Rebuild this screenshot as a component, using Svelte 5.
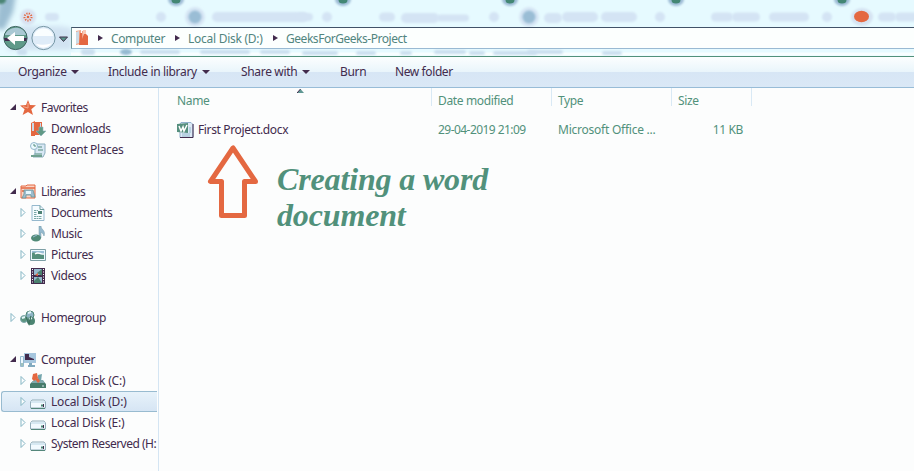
<script>
  const groups = [
    { name: 'Favorites', icon: 'star', open: true, tight: true, items: [
      { name: 'Downloads', icon: 'download' }, { name: 'Recent Places', icon: 'recent' } ] },
    { name: 'Libraries', icon: 'library', open: true, tight: true, items: [
      { name: 'Documents', icon: 'document', more: true }, { name: 'Music', icon: 'music', more: true },
      { name: 'Pictures', icon: 'picture', more: true }, { name: 'Videos', icon: 'video', more: true } ] },
    { name: 'Homegroup', icon: 'homegroup', open: false, items: [] },
    { name: 'Computer', icon: 'computer', open: true, items: [
      { name: 'Local Disk (C:)', icon: 'system', more: true, wide: true }, { name: 'Local Disk (D:)', icon: 'disk', more: true, selected: true, wide: true },
      { name: 'Local Disk (E:)', icon: 'disk', more: true, wide: true }, { name: 'System Reserved (H:', icon: 'disk', more: true, tight: true } ] }
  ];
  const smudges = [
    [52, 17, 7, 4], [161, 17, 5, 5], [260, 17, 48, 5], [305, 17, 8, 4], [327, 17, 5, 5], [387, 17, 8, 4.5], [420, 18, 19, 5],
    [453, 18, 16, 3.5], [494, 17, 5, 5], [553, 18, 9, 5], [580, 17, 18, 5], [619, 17, 18, 5], [660, 17, 5, 5],
    [722, 17, 11, 4.5], [746, 17, 14, 4.5], [789, 17, 20, 4.5], [827, 17, 5, 5], [887, 17, 9, 4.5], [907, 17, 12, 4.5]
  ];
  const lower = [[22, 52, 5, 3], [88, 52, 7, 3], [160, 52, 20, 2], [225, 52, 25, 2], [275, 52, 15, 2], [320, 53, 18, 2], [366, 53, 10, 2], [406, 53, 6, 2], [450, 52, 16, 2], [477, 53, 8, 2], [515, 53, 22, 2], [545, 52, 18, 2], [612, 53, 10, 2]];
  const spots = [176, 343, 510, 676, 842];
</script>

{#snippet arrow(open)}
  {#if open}
    <svg class="arrow" viewBox="0 0 7 9"><path d="M6 1v6H0z" fill="#422b4d" /></svg>
  {:else}
    <svg class="arrow" viewBox="0 0 7 9"><path d="M1 .5v8L5 4.5z" fill="#fcfeff" stroke="#84b5c3" /></svg>
  {/if}
{/snippet}

{#snippet glyph(kind)}
  <svg class="icon" viewBox="0 0 16 16">
    {#if kind === 'star'}
      <path d="M8 0l2 5 6 .3-4.7 4L13 15l-5-3-5.4 3 2-5.7L0 5.5 6 5z" fill="#e46841" /><path d="M8 3v5L3 6.6" fill="none" stroke="#f5aa8e" />
    {:else if kind === 'download'}
      <path d="M1 2l4-2v15H1zM5 1h7v13H5z" fill="#e46841" /><path d="M2 2h2v8H2zM10 2h1v5h-1z" fill="#c9dae9" /><path d="M9 6h4v4h3l-5 5-5-5h3z" fill="#609985" stroke="#8fb5bd" stroke-width=".6" />
    {:else if kind === 'recent'}
      <path d="M5 2h10v9l-2 4H3l2-4z" fill="#d8e8f5" stroke="#8baebe" /><circle cx="4" cy="4" r="3.5" fill="#edfaff" stroke="#94b8cc" /><path d="M4 2v2h2M8 5h4M8 8h5M5 12h7" fill="none" stroke="#528c7a" /><path d="M1 13h11v2H1z" fill="#70a190" />
    {:else if kind === 'library'}
      <path d="M1 2h5l1-1h8v13H1z" fill="#fbd5c6" stroke="#e46841" /><path d="M1 4h14M2 7h3" stroke="#e46841" stroke-width="1.4" /><path d="M4 6h9l2 7h-4v-2H6v3H2l2-4z" fill="#9dbdcf" stroke="#628f91" stroke-width=".7" /><path d="M6 7h5v3H6z" fill="#e5f7fd" />
    {:else if kind === 'document'}
      <path d="M2 .5h8l4 4v11H2z" fill="#f6fcff" stroke="#96b9ce" /><path d="M10 .5v4h4" fill="none" stroke="#6b9c9b" /><path d="M4 5.5h4m-4 2h3m-3 2h3m-3 2h8m-8 2h8" fill="none" stroke="#6b9c9b" stroke-width=".9" stroke-dasharray="2 .5" /><path d="M8 6h4v3H8z" fill="#4d8174" />
    {:else if kind === 'music'}
      <path d="M9 0h2c0 4 5 4 3 10-1-3-2-3-3-4v6H9z" fill="#94b9ce" stroke="#7198a6" stroke-width=".5" /><ellipse cx="6" cy="12" rx="5" ry="3.5" fill="#508a76" /><path d="M3 11l4-2" stroke="#94b9ce" />
    {:else if kind === 'picture'}
      <path d="M.5 2.5h15v11H.5z" fill="#edf9ff" stroke="#7c9fa5" /><path d="M2 4h12v8H2z" fill="#9bbfd6" /><path d="M2 6c5-2 7 3 12 1v5H2z" fill="#548f7c" /><path d="M5 7c4-3 5 1 9 0" fill="none" stroke="#fff" stroke-width="1.4" />
    {:else if kind === 'video'}
      <path d="M1 0h14v16H1z" fill="#422b4d" /><path d="M4 1h8v6H4zM4 9h8v6H4z" fill="#94b9ce" /><path d="M12 1L7 5l5 3zM4 13l4-4 4 6H4z" fill="#4b816f" /><path d="M2.5 1v15M13.5 1v15" stroke="#fff" stroke-width="1" stroke-dasharray="1 1.5" /><path d="M4 8h8" stroke="#422b4d" /><path d="M5 7l3-2v3z" fill="#e46841" />
    {:else if kind === 'homegroup'}
      <circle cx="10" cy="5" r="4" fill="#8eb4c5" stroke="#4d8672" /><circle cx="4" cy="9" r="3.5" fill="#5b947f" stroke="#7da8ad" /><circle cx="11" cy="11" r="4" fill="#4c8572" /><path d="M8 3l3-1M2 8l3-1M9 9l3-1" stroke="#e4f6fa" stroke-width="2" /><path d="M6 7l3 7 2-8" fill="none" stroke="#3e725f" stroke-width="1.3" />
    {:else if kind === 'computer'}
      <path d="M4 1h12v10H4z" fill="#a6c6de" /><path d="M5 2h4v3l5 2v1H5z" fill="#422b4d" /><path d="M9 11h3v2h3v2H8v-2h1z" fill="#81aabf" /><path d="M.5 4.5h3v10h-3z" fill="#edf8ff" stroke="#94b9ce" /><path d="M2 11v3" stroke="#528b78" />
    {:else if kind === 'system'}
      <path d="M3 8h10l3 3v4H0v-4z" fill="#477c6b" /><path d="M1 10l3-3h9l2 3z" fill="#81a9ad" /><path d="M3 1l4-1 1 5-4 3-2-2z" fill="#e46841" /><path d="M8 2l4-1-1 7H8z" fill="#74a6ad" /><path d="M5 6l3-1 2 3-2 2z" fill="#e46841" /><path d="M12 13h2" stroke="#d5e6ec" />
    {:else}
      <path d="M2 6h12l1.5 2v6H.5V8z" fill="#f2faff" stroke="#94aeba" /><path d="M1 8h14" stroke="#d6e8f2" stroke-width="2" /><path d="M1 14.5h14" stroke="#54877b" /><path d="M11 10.5h3v2h-3z" fill="#4c8873" /><path d="M13.5 10v3" stroke="#422b4d" />
    {/if}
  </svg>
{/snippet}

<div class="window">
  <header>
    <svg class="glass" viewBox="0 0 914 56">
      <defs>
        <filter id="soft" x="-50%" width="200%" y="-50%" height="200%"><feGaussianBlur stdDeviation="1.3" /></filter>
        <filter id="wide" x="-50%" width="200%" y="-50%" height="200%"><feGaussianBlur stdDeviation="2.5" /></filter>
      </defs>
      <path d="M0-5h16L13 12 4 30-5 28z" fill="#9bbdd2" filter="url(#wide)" />
      <ellipse cx="1" cy="0" rx="5" ry="4" fill="#4b8574" filter="url(#soft)" />
      <path d="M20 26h40l12 2v22H6z" fill="#d1e3f2" filter="url(#wide)" />
      {#each smudges as [x, y, rx, ry]}<rect x={x - rx} y={y - ry} width={rx * 2} height={ry * 2} rx={ry} fill="#d4e4f4" filter="url(#soft)" />{/each}
      <path d="M71 54h843" stroke="#f8feff" stroke-width="3" />
      {#each lower as [x, y, rx, ry]}<rect x={x - rx} y={y - ry} width={rx * 2} height={ry * 2} rx={ry} fill="#cbdfef" filter="url(#soft)" />{/each}
      <ellipse cx="126" cy="52" rx="6" ry="3" fill="#94b9d1" filter="url(#soft)" />
      {#each spots as x}
        <ellipse cx={x} cy="-1" rx="8" ry="7" fill="#9dbbd5" filter="url(#soft)" />
        <ellipse cx={x} cy="0" rx="4.5" ry="3.5" fill="#438774" />
      {/each}
      {#each [195, 529] as x}
        <circle cx={x} cy="17" r="10" fill="#d6e5f4" filter="url(#soft)" /><circle cx={x} cy="17" r="6.5" fill="#9abdd5" filter="url(#soft)" />
      {/each}
      <circle cx="28" cy="17" r="8" fill="#d8e2f1" filter="url(#soft)" />
      <circle cx="28" cy="17" r="3.5" fill="none" stroke="#e46841" stroke-width="2" stroke-dasharray="1.2 1.2" /><circle cx="28" cy="17" r="1.3" fill="#e46841" />
      <ellipse cx="862" cy="17" rx="11" ry="9" fill="#d5e3f2" filter="url(#soft)" /><ellipse cx="861.5" cy="16.5" rx="7.5" ry="5.7" fill="#e46841" />
    </svg>
    <div class="nav">
      <svg class="buttons" viewBox="0 0 71 30">
        <circle cx="15.5" cy="14" r="11.6" fill="#5f9a89" stroke="#3d6460" />
        <path d="M5 11c2-8 18-11 21 0" fill="#a9c8d3" />
        <path d="M4 14h23l-1 3H5z" fill="#422b4d" />
        <path d="M7 14l8-6v4h9v5h-9v4z" fill="#fff" />
        <circle cx="43.5" cy="14" r="11.6" fill="#dfecf8" stroke="#7596a4" />
        <path d="M34 12c1-10 18-10 19 0z" fill="#fafeff" /><path d="M36 20c4 5 12 5 16-1-4 2-11 2-16 1z" fill="#fff" />
        <path d="M59.5 13h8l-4 4.5z" fill="#59968a" stroke="#40334e" />
      </svg>
      <div class="address">
        <svg class="folder" viewBox="0 0 16 18"><path d="M2 2l5-1v14l-5 1zM8 2h4v13H8z" fill="#f3a689" /><path d="M2 3l3-1v12l-3 1z" fill="#ccdbe6" /><path d="M9 1h3v6H9z" fill="#f8cbb8" /><path d="M6 4h2v6l2-5h2l2 2v9H5z" fill="#e46841" /></svg>
        <i class="right first"></i><span class="a1">Computer</span><i class="right"></i><span class="a2">Local Disk (D:)</span><i class="right"></i><span class="a3">GeeksForGeeks-Project</span>
      </div>
    </div>
  </header>

  <div class="toolbar">
    <span class="t1">Organize <i class="down"></i></span><span class="t2">Include in library <i class="down"></i></span><span class="t3">Share with <i class="down"></i></span><span class="t4">Burn</span><span class="t5">New folder</span>
  </div>

  <div class="content">
    <aside>
      {#each groups as group}
        <section>
          <div class="row" class:tight={group.tight}>{@render arrow(group.open)}{@render glyph(group.icon)}<span>{group.name}</span></div>
          {#each group.items as item}
            <div class="row child" class:selected={item.selected} class:tight={item.tight} class:wide={item.wide}>
              {#if item.more}{@render arrow(false)}{:else}<b class="arrow"></b>{/if}
              {@render glyph(item.icon)}<span>{item.name}</span>
            </div>
          {/each}
        </section>
      {/each}
    </aside>
    <main>
      <div class="columns">
        <div class="name">Name<svg class="sort" viewBox="0 0 7 4"><path d="M0 4l3.5-4L7 4z" fill="#5f9793" /><path d="M0 4l3.5-4" stroke="#422b4d" /></svg></div>
        <div>Date modified</div><div>Type</div><div class="size">Size</div>
      </div>
      <div class="file">
        <div class="name">
          <svg class="word" viewBox="0 0 17 16"><path d="M4 .5h10l2 2v13H3V2z" fill="#dce9f5" stroke="#91b1ce" /><path d="M16 2v13.5H3" fill="none" stroke="#422b4d" /><path d="M5 12h8m-8 2h8m0-9v6" stroke="#94b9ce" /><path d="M0 2l11-1v10L0 10z" fill="#558f7e" /><path d="M2 4l2 5 2-4 1 4 3-6" fill="none" stroke="#fff" stroke-width="1.5" /></svg>
          <span>First Project.docx</span>
        </div>
        <div class="date">29-04-2019 21:09</div><div class="type">Microsoft Office ...</div><div class="bytes">11 KB</div>
      </div>
      <div class="note">
        <svg class="pointer" viewBox="0 0 52 74"><path d="M26 3L3.5 36.5h11v34h23v-34h11z" fill="none" stroke="#e46841" stroke-width="5" stroke-linejoin="round" /></svg>
        <p>Creating a word<br />document</p>
      </div>
    </main>
  </div>
</div>

<style>
  :global(body) { margin: 0; }
  .window { width: 914px; height: 471px; overflow: hidden; display: flex; flex-direction: column; background: #fcfdfd; color: #422b4d; font: 12px/21px "Noto Sans", "Open Sans", sans-serif; letter-spacing: -.36px; white-space: nowrap; }
  header { position: relative; height: 56px; flex: none; background: #e6faff; border-bottom: 1px solid #51917b; overflow: hidden; }
  .glass { position: absolute; inset: 0; width: 914px; height: 56px; }
  .nav { position: relative; padding-top: 24px; display: flex; }
  .buttons { width: 71px; height: 30px; flex: none; }
  .address { margin-top: 3px; height: 20px; flex: 1; display: flex; align-items: center; background: #fcfffe; border: 1px solid #99bad3; border-top-color: #415268; border-left-color: #6f9697; border-right: 0; color: #51857e; }
  .folder { width: 16px; height: 18px; margin-left: 2px; }
  .right { width: 0; border: 3.5px solid transparent; border-left: 5px solid #422b4d; border-right: 0; margin: 0 8px 0 9px; }
  .right.first { margin-left: 8px; }
  .a1 { width: 55px; }
  .a2 { width: 76px; letter-spacing: -.27px; }
  .a3 { letter-spacing: -.46px; }
  .toolbar { height: 31px; flex: none; display: flex; padding-left: 18px; box-sizing: border-box; line-height: 30px; letter-spacing: -.33px; background: linear-gradient(#fcfefe 0, #e9f5fb 50%, #d7e6f5 51%, #dae8f6); border-bottom: 1px solid #98bcd7; }
  .t1 { width: 90px; }
  .t2 { width: 133px; }
  .t3 { width: 99px; }
  .t4 { width: 55px; }
  .t5 { letter-spacing: -.4px; }
  .down { display: inline-block; border: 4px solid transparent; border-top: 4px solid #422b4d; border-bottom: 0; vertical-align: 2px; margin-left: 2px; }
  .content { flex: 1; display: flex; min-height: 0; }
  aside { width: 158px; padding-top: 9px; border-right: 1px solid #d4e5f3; flex: none; }
  section { margin-bottom: 21px; }
  .row { height: 21px; width: 158px; display: flex; align-items: center; padding-left: 10px; box-sizing: border-box; }
  .child { padding-left: 20px; }
  .tight { letter-spacing: -.5px; }
  .wide { letter-spacing: -.2px; }
  .arrow { width: 7px; height: 9px; flex: none; }
  .icon { width: 16px; height: 16px; margin: 0 5px 0 3px; flex: none; }
  .selected { border: 1px solid #98bbd0; border-right: 0; border-radius: 3px 0 0 3px; background: linear-gradient(#e7f2fa, #d6e5f4); width: 156px; margin-left: 1px; padding-left: 18px; }
  main { flex: 1; min-width: 0; }
  .columns { display: flex; height: 18px; margin-bottom: 13px; color: #51917b; }
  .columns > div { width: 120px; box-sizing: border-box; padding-left: 6px; border-right: 1px solid #d9e9f5; line-height: 25px; }
  .columns > .name { position: relative; width: 273px; padding-left: 18px; }
  .columns > .size { width: 80px; }
  .sort { position: absolute; left: 138px; top: 1px; width: 7px; height: 4px; }
  .file { display: flex; color: #51917b; }
  .file > div { width: 120px; padding-left: 6px; box-sizing: border-box; }
  .file > .name { width: 273px; padding-left: 18px; color: #422b4d; display: flex; align-items: center; }
  .file > .date { letter-spacing: -.55px; }
  .file > .type { letter-spacing: -.24px; }
  .file > .bytes { width: 71px; text-align: right; }
  .word { width: 17px; height: 16px; margin-right: 4px; }
  .note { display: flex; padding-left: 48px; margin-top: 5px; }
  .pointer { width: 52px; height: 74px; flex: none; }
  .note p { margin: 16px 0 0 18px; color: #51917b; font: italic bold 32px/36px "Liberation Serif", serif; letter-spacing: -.15px; }
</style>
